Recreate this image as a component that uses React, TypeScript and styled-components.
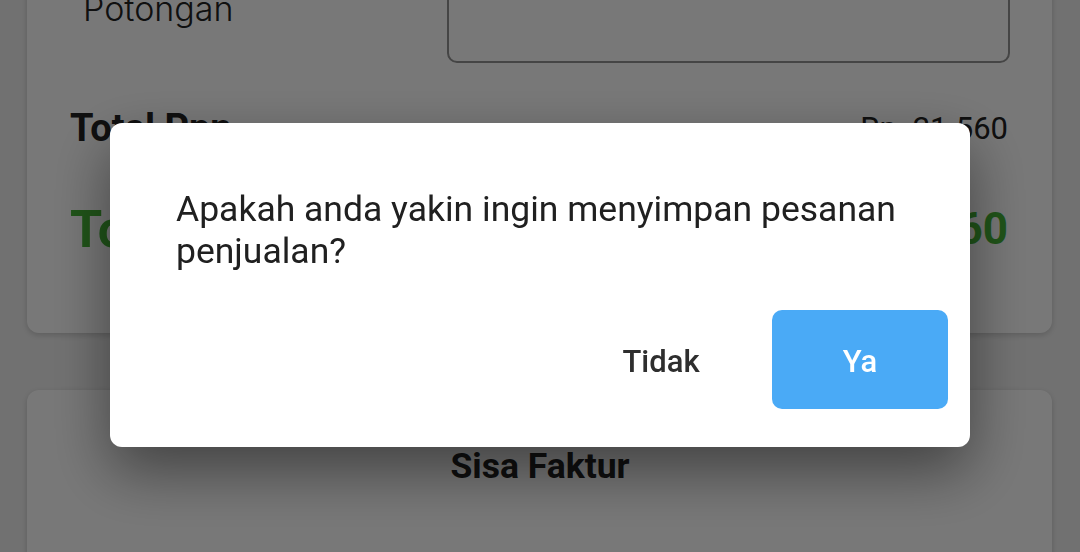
import React from "react";
import styled, { createGlobalStyle } from "styled-components";

const Global = createGlobalStyle`
  html, body { margin: 0; padding: 0; }
  body {
    width: 1080px;
    height: 552px;
    overflow: hidden;
    background: #f1f1f1;
    font-family: Roboto, "Noto Sans", sans-serif;
  }
`;

const Page = styled.div`
  display: flex;
  flex-direction: column;
  gap: 57px;
  padding: 0 28px 0 27px;
  margin-top: -40px;
`;

const Card = styled.section<{ $pt?: number; $pb?: number }>`
  background: #ffffff;
  border-radius: 12px;
  box-shadow: 0 2px 6px rgba(0, 0, 0, 0.18);
  padding: ${(p) => p.$pt ?? 0}px 42px ${(p) => p.$pb ?? 0}px 43px;
  display: flex;
  flex-direction: column;
`;

const FieldRow = styled.div`
  display: flex;
  justify-content: space-between;
  align-items: flex-start;
`;

const FieldLabel = styled.span`
  font-family: Inter, "Noto Sans", sans-serif;
  font-weight: 300;
  font-size: 34px;
  line-height: 40px;
  color: #222;
  margin-top: 16px;
  padding-left: 13px;
`;

const InputBox = styled.div`
  width: 559px;
  height: 86px;
  border: 2px solid #929292;
  border-radius: 10px;
`;

const SumRow = styled.div<{ $mt: number; $h: number }>`
  display: flex;
  justify-content: space-between;
  align-items: center;
  margin-top: ${(p) => p.$mt}px;
  height: ${(p) => p.$h}px;
`;

const SumLabel = styled.span<{ $size: number; $color: string }>`
  font-weight: 700;
  font-size: ${(p) => p.$size}px;
  color: ${(p) => p.$color};
`;

const SumValue = styled.span<{ $size: number; $color: string; $weight: number }>`
  font-weight: ${(p) => p.$weight};
  font-size: ${(p) => p.$size}px;
  color: ${(p) => p.$color};
  margin-right: 2px;
`;

const CardTitle = styled.h2`
  margin: 0;
  text-align: center;
  font-weight: 700;
  font-size: 35.5px;
  line-height: 44px;
  color: #222;
  height: 200px;
`;

const Overlay = styled.div`
  position: fixed;
  inset: 0;
  background: rgba(0, 0, 0, 0.53);
  display: flex;
  justify-content: center;
  align-items: center;
  padding-top: 18px;
  box-sizing: border-box;
`;

const Dialog = styled.div`
  width: 860px;
  height: 324px;
  box-sizing: border-box;
  background: #ffffff;
  border-radius: 12px;
  box-shadow: 0 24px 60px rgba(0, 0, 0, 0.45);
  display: flex;
  flex-direction: column;
  padding: 65px 22px 38px 66px;
`;

const Message = styled.p`
  margin: 0;
  font-size: 35.5px;
  line-height: 42px;
  color: #202020;
  padding-right: 20px;
`;

const Actions = styled.div`
  margin-top: auto;
  display: flex;
  justify-content: flex-end;
  gap: 23px;
`;

const Button = styled.button<{ $primary?: boolean }>`
  width: 176px;
  height: 99px;
  border: none;
  border-radius: 10px;
  padding: 4px 0 0;
  background: ${(p) => (p.$primary ? "#4aaaf6" : "transparent")};
  color: ${(p) => (p.$primary ? "#ffffff" : "#2e2e2e")};
  font-family: Roboto, "Noto Sans", sans-serif;
  font-weight: 500;
  font-size: 31px;
  cursor: pointer;
`;

export default function App() {
  return (
    <>
      <Global />
      <Page>
        <Card $pt={13} $pb={74}>
          <FieldRow>
            <FieldLabel>Potongan</FieldLabel>
            <InputBox />
          </FieldRow>
          <SumRow $mt={42} $h={46}>
            <SumLabel $size={38} $color="#222">Total Ppn</SumLabel>
            <SumValue $size={31} $color="#222" $weight={400}>Rp. 21.560</SumValue>
          </SumRow>
          <SumRow $mt={48} $h={60}>
            <SumLabel $size={52} $color="#45b336">Total</SumLabel>
            <SumValue $size={44} $color="#45b336" $weight={700}>Rp. 237.160</SumValue>
          </SumRow>
        </Card>
        <Card $pt={54}>
          <CardTitle>Sisa Faktur</CardTitle>
        </Card>
      </Page>
      <Overlay>
        <Dialog role="dialog">
          <Message>Apakah anda yakin ingin menyimpan pesanan penjualan?</Message>
          <Actions>
            <Button>Tidak</Button>
            <Button $primary>Ya</Button>
          </Actions>
        </Dialog>
      </Overlay>
    </>
  );
}
